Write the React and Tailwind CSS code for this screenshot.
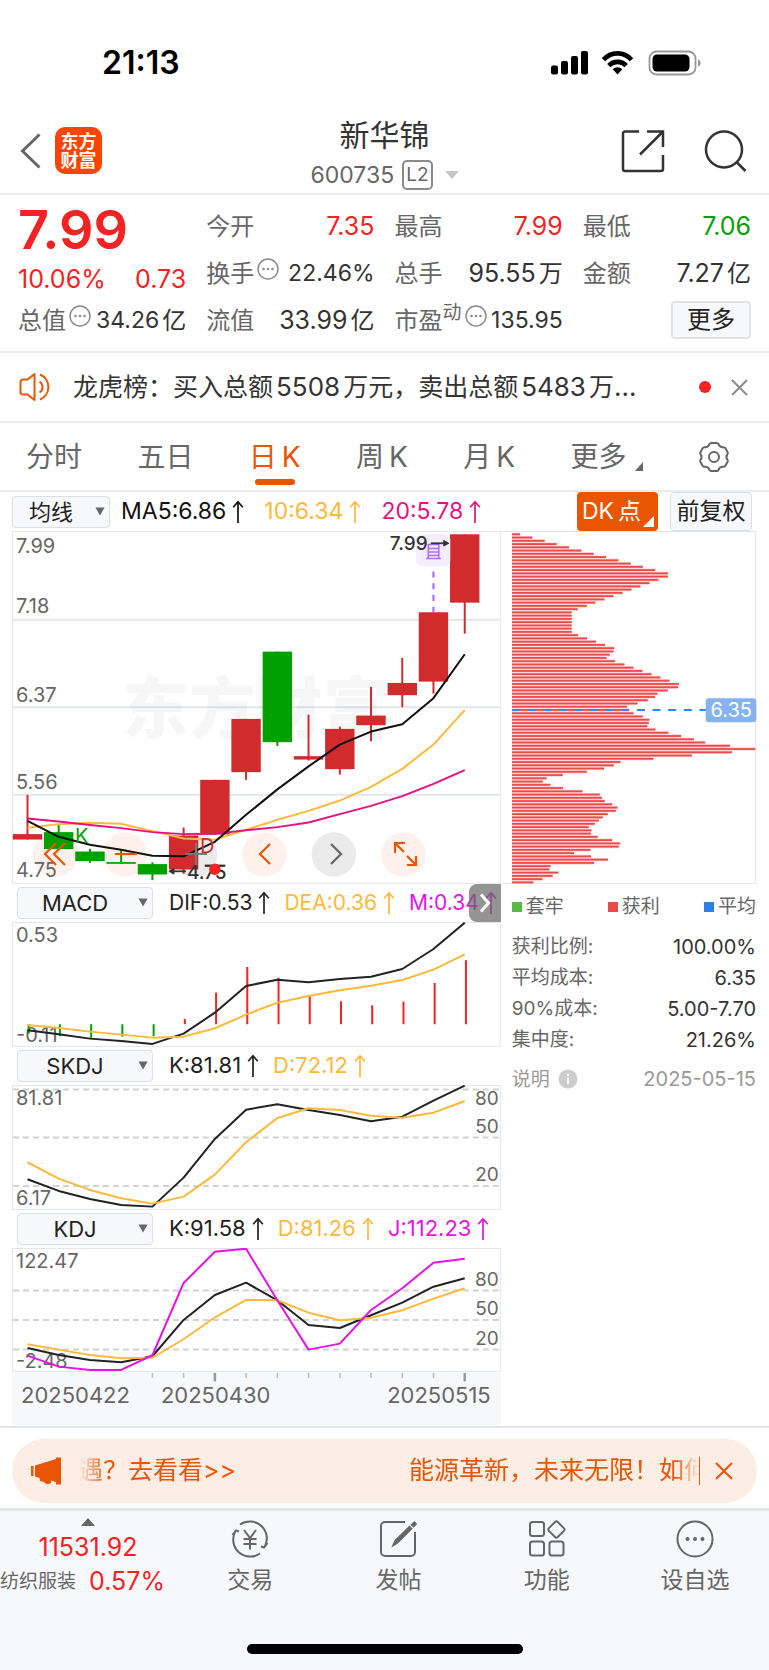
import React from "react";

const XS = [27.5, 58.7, 90, 121.2, 152.5, 183.7, 215, 246.2, 277.5, 308.7, 340, 371.2, 402.5, 433.7, 465];

// [body top, body bottom, high, low, rising]
const CANDLES = [
  [833.3, 838.7, 794, 838.7, true],
  [831.3, 848.3, 824, 848.3, false],
  [850.7, 860.3, 848, 862, false],
  [861.3, 863, 849, 863, false],
  [863.3, 873.7, 861.5, 879.3, false],
  [834.7, 868.7, 826.7, 873, true],
  [779, 833.7, 779, 833.7, true],
  [718, 771.3, 718, 779, true],
  [650.7, 741.3, 650.7, 745, false],
  [755.3, 758.7, 713.7, 759.7, true],
  [728, 768.3, 725.7, 773.7, true],
  [714.7, 724.3, 686, 740.3, true],
  [682, 694.3, 657, 706.3, true],
  [611.3, 680.7, 611.3, 692.7, true],
  [533.3, 601.7, 533.3, 632.7, true],
];
const MA5 = [820, 836, 844, 849, 855, 855.5, 841, 814, 788.5, 765.5, 743.7, 730.7, 723.3, 697.3, 653.3];
const MA10 = [827, 823.3, 822, 823, 830.3, 837.7, 839, 829, 819, 810, 799.7, 786, 768, 743.7, 709.3];
const MA20 = [817.7, 820.7, 824.2, 827.3, 831.3, 833.3, 833, 829.5, 826.3, 821.7, 813.3, 805, 795.3, 783, 769.3];

const DIF = [1029.3, 1033.3, 1037.7, 1040, 1043, 1032.7, 1011.7, 985, 978.7, 981.3, 978, 975.7, 968, 948, 921.7];
const DEA = [1024, 1027, 1030.7, 1033.7, 1036.7, 1035.7, 1027.3, 1013.7, 1001.7, 995, 989.3, 984.7, 979, 968.7, 953.3];
const MACD = [1032.7, 1035.3, 1037.3, 1035.7, 1035.3, 1018, 991.7, 966, 976.7, 995, 1000.3, 1004.3, 1000.7, 982, 959.3];

const SK = [1178.3, 1190, 1198, 1204, 1205.7, 1176.7, 1138, 1108.7, 1103.3, 1109, 1114, 1120.3, 1115.7, 1099.7, 1084.7];
const SD = [1161.3, 1177.7, 1189, 1197.3, 1202.7, 1195.7, 1173.7, 1141.3, 1117, 1107.3, 1109, 1114.7, 1116.7, 1111.7, 1100];

const KK = [1347, 1354, 1359, 1361.3, 1355.3, 1319, 1294, 1281.7, 1299.3, 1324, 1327, 1314.3, 1301.7, 1285.7, 1277.3];
const KD = [1343.3, 1348.7, 1354, 1357.3, 1356.7, 1338.3, 1316.3, 1299, 1299.3, 1311.7, 1319.3, 1316.7, 1309.3, 1297.7, 1287.3];
const KJ = [1354.7, 1365.7, 1369, 1369, 1354.3, 1282, 1250.7, 1247.7, 1299.3, 1348.7, 1342.7, 1309, 1287.3, 1261.7, 1257.7];

const CHIPS = [
  24, 61, 98, 134, 171, 208, 245, 282, 319, 356, 392, 429, 467, 467, 439, 412, 385, 358, 331, 304, 277, 250, 224, 197,
  179, 179, 179, 179, 179, 179, 179, 198, 225, 252, 279, 306, 304, 293, 283, 309, 337, 364, 391, 418, 445, 472, 500,
  498, 467, 436, 429, 407, 376, 345, 350, 364, 392, 412, 410, 406, 430, 469, 507, 545, 579, 653, 729, 659, 539, 424,
  325, 305, 276, 224, 152, 104, 92, 115, 153, 211, 263, 270, 278, 300, 316, 311, 287, 272, 260, 248, 230, 238, 237,
  257, 300, 324, 320, 235, 186, 237, 288, 246, 116, 112, 139, 122, 91, 64,
];

const pts = (ys) => ys.map((y, i) => `${XS[i]},${y}`).join(" ");

function Line({ ys, color }) {
  return <polyline points={pts(ys)} fill="none" stroke={color} strokeWidth="2" strokeLinejoin="round" />;
}

function AxisText({ x = 16, y, end, children }) {
  return (
    <text x={x} y={y} fontSize={end ? 19 : 20} fill="#666" textAnchor={end ? "end" : "start"}>
      {children}
    </text>
  );
}

function Frame({ y, h }) {
  return <rect x="12.5" y={y + 0.5} width="488" height={h - 1} fill="none" stroke="#e4e6ec" />;
}

function Dashes({ ys }) {
  return ys.map((y) => (
    <line key={y} x1="13" x2="500" y1={y} y2={y} stroke="#d2d2d2" strokeWidth="2" strokeDasharray="6 4" />
  ));
}

function More() {
  return (
    <svg viewBox="0 0 22 22" className="h-[22px] w-[22px] shrink-0 self-start" fill="none" stroke="#8c8c8c">
      <circle cx="11" cy="11" r="10" strokeWidth="1.5" />
      <g fill="#8c8c8c" stroke="none">
        <circle cx="6.5" cy="11" r="1.3" />
        <circle cx="11" cy="11" r="1.3" />
        <circle cx="15.5" cy="11" r="1.3" />
      </g>
    </svg>
  );
}

function Stat({ label, sup, info, value, unit, color = "text-[#333]" }) {
  return (
    <div className="flex h-[47px] items-center">
      <dt className="flex items-center text-[#666]">
        {label}
        {sup && <sup className="-top-2 text-[19px] leading-none">{sup}</sup>}
      </dt>
      {info && (
        <span className="flex h-8 pl-[3px]">
          <More />
        </span>
      )}
      <dd className={`ml-auto flex items-center gap-[3px] whitespace-nowrap ${info ? "text-[23px]" : "text-[25px]"} ${color}`}>
        {value}
        {unit && <span className="text-[24px]">{unit}</span>}
      </dd>
    </div>
  );
}

function Picker({ label, options, className }) {
  return (
    <div className={`relative ${className}`}>
      <select
        aria-label={label}
        className="block h-8 w-full appearance-none rounded border border-[#dcdfe5] bg-[#f7f8fb] pr-5 text-center text-[22px] leading-none text-[#222]"
      >
        {options.map((o) => (
          <option key={o}>{o}</option>
        ))}
      </select>
      <svg viewBox="0 0 10 9" className="pointer-events-none absolute right-[5px] top-[11px] h-[9px] w-[10px]" fill="#666">
        <path d="M0.5 0.5h9L5 8.5z" />
      </svg>
    </div>
  );
}

function Up({ children, color }) {
  return (
    <span className={`flex items-center gap-[6px] whitespace-nowrap ${color}`}>
      {children}
      <svg viewBox="0 0 12 24" className="h-6 w-3" fill="none" stroke="currentColor" strokeWidth="1.7">
        <path d="M6 23V2M1.2 7.2L6 1.8l4.8 5.4" />
      </svg>
    </span>
  );
}

function IndicatorRow({ label, options, children }) {
  return (
    <div className="flex h-[38px] items-center pl-[5px]">
      <Picker label={label} options={options} className="w-[136px] shrink-0" />
      <div className="flex items-center gap-[14px] pl-4">{children}</div>
    </div>
  );
}

function StatusBar() {
  return (
    <div className="flex h-[103px] items-center justify-between pl-[102px] pr-[68px] pt-[22px]">
      <span className="text-[32px] font-semibold leading-none text-black">21:13</span>
      <svg viewBox="0 0 151 26" className="h-[26px] w-[151px]">
        <rect x="1" y="15.500" width="7" height="9" rx="2" />
        <rect x="11" y="11" width="7" height="13.500" rx="2" />
        <rect x="21" y="6" width="7" height="18.500" rx="2" />
        <rect x="31" y="1" width="7" height="23.500" rx="2" />
        <g fill="none" stroke="#000" strokeWidth="4.600">
          <path d="M53.500 9.800a18.500 18.500 0 0 1 28 0" />
          <path d="M58.800 15.600a12 12 0 0 1 17.400 0" />
        </g>
        <path d="M67.500 24.500l-4.800-5.300a6.800 6.800 0 0 1 9.600 0z" />
        <rect x="99.500" y="1.500" width="46" height="23" rx="7" fill="none" stroke="#999" strokeWidth="1.800" />
        <rect x="102.500" y="4.500" width="37" height="17" rx="4.500" />
        <path d="M148 9.500c2 .6 2.600 2 2.600 3.500s-.6 2.900-2.600 3.500z" fill="#999" />
      </svg>
    </div>
  );
}

function Header() {
  return (
    <header className="grid h-[92px] grid-cols-[1fr_auto_1fr] border-b-2 border-[#ececec]">
      <div className="flex items-center gap-[14px] pl-[20px] pt-[3px]">
        <button aria-label="返回">
          <svg viewBox="0 0 21 36" className="h-9 w-[21px]" fill="none" stroke="#666" strokeWidth="3">
            <path d="M19.500 1.500L2.500 18l17 16.500" />
          </svg>
        </button>
        <a
          href="#home"
          className="flex h-[47px] w-[47px] flex-col items-center justify-center rounded-[10px] bg-[#ff4400] text-[18px] font-bold leading-[19px] text-white"
        >
          <span>东方</span>
          <span>财富</span>
        </a>
      </div>
      <div className="flex flex-col items-center pt-3">
        <h1 className="text-[30px] leading-[40px] text-[#333]">新华锦</h1>
        <button className="flex items-center gap-[8px] text-[23px] leading-[40px] text-[#666]">
          600735
          <span className="rounded-[5px] border-2 border-[#8a8a8a] px-[2px] text-[19px] leading-[26px]">L2</span>
          <svg viewBox="0 0 14 8" className="ml-1 h-2 w-[14px]" fill="#c6c6c6">
            <path d="M0 0h14L7 8z" />
          </svg>
        </button>
      </div>
      <div className="flex items-center justify-end gap-[38px] pr-[22px] pt-[3px]">
        <button aria-label="分享">
          <svg viewBox="0 0 44 44" className="h-11 w-11" fill="none" stroke="#333" strokeWidth="2.500">
            <path d="M18 2.500H4a2 2 0 0 0-2 2V40a2 2 0 0 0 2 2h36a2 2 0 0 0 2-2V26M26 2.500h16V18M42 2.500L19 25.500" />
          </svg>
        </button>
        <button aria-label="搜索">
          <svg viewBox="0 0 44 44" className="h-11 w-11" fill="none" stroke="#333" strokeWidth="2.500">
            <circle cx="21" cy="20.500" r="18" />
            <path d="M33.500 33l9 9" />
          </svg>
        </button>
      </div>
    </header>
  );
}

function Quote() {
  return (
    <section className="grid grid-cols-4 gap-x-[20px] border-b-2 border-[#e9ebf1] px-[18px] pb-[7px] pt-2 text-[24px] leading-none">
      <div>
        <p className="h-[59px] text-[54px] font-semibold leading-[54px] text-[#f32323]">7.99</p>
        <p className="flex h-[35px] items-center justify-between text-[25px] text-[#f32323]">
          <span>10.06%</span>
          <span>0.73</span>
        </p>
        <dl>
          <Stat label="总值" info value="34.26" unit="亿" />
        </dl>
      </div>
      <dl>
        <Stat label="今开" value="7.35" color="text-[#f32323]" />
        <Stat label="换手" info value="22.46%" />
        <Stat label="流值" value="33.99" unit="亿" />
      </dl>
      <dl>
        <Stat label="最高" value="7.99" color="text-[#f32323]" />
        <Stat label="总手" value="95.55" unit="万" />
        <Stat label="市盈" sup="动" info value="135.95" />
      </dl>
      <div>
        <dl>
          <Stat label="最低" value="7.06" color="text-[#0a9d0a]" />
          <Stat label="金额" value="7.27" unit="亿" />
        </dl>
        <div className="flex h-[45px] items-center justify-end">
          <button className="h-[38px] rounded border-2 border-[#e1e3e8] bg-[#f7f8fb] px-[14px] text-[#222]">更多</button>
        </div>
      </div>
    </section>
  );
}

function News() {
  return (
    <section className="flex h-[70px] items-center border-b-2 border-[#ececec] pl-[19px] pr-[21px]">
      <svg viewBox="0 0 34 30" className="h-[30px] w-[34px] shrink-0" fill="none" stroke="#ea5504" strokeWidth="2">
        <path d="M15.500 2v26l-7-5.500H4a2.500 2.500 0 0 1-2.500-2.500V10A2.500 2.500 0 0 1 4 7.500h4.500z" strokeLinejoin="round" />
        <path d="M20.500 9.500a6.500 6.500 0 0 1 0 11M21 2.500a13.500 13.500 0 0 1 0 25" />
      </svg>
      <a href="#news" className="min-w-0 flex-1 truncate pl-5 text-[25px] text-[#333]">
        龙虎榜：买入总额<span className="px-[3px] text-[26px]">5508</span>万元，卖出总额
        <span className="px-[3px] text-[26px]">5483</span>万<span className="text-[26px]">...</span>
      </a>
      <span className="h-3 w-3 shrink-0 rounded-full bg-[#f32323]" />
      <button aria-label="关闭" className="ml-5">
        <svg viewBox="0 0 17 17" className="h-[17px] w-[17px]" stroke="#8c8c8c" strokeWidth="2">
          <path d="M1 1l15 15M16 1L1 16" />
        </svg>
      </button>
    </section>
  );
}

function Tabs() {
  const items = [["分时"], ["五日"], ["日", "K"], ["周", "K"], ["月", "K"]];
  return (
    <nav className="flex h-[69px] items-center justify-between border-b-2 border-[#ececec] pl-[26px] pr-[39px] text-[28px] leading-none text-[#666]">
      {items.map(([a, b]) => (
        <button
          key={a}
          className={`relative flex h-[67px] items-center gap-[5px] whitespace-nowrap ${a === "日" ? "text-[#ea5504]" : ""}`}
        >
          <span>{a}</span>
          {b && <span>{b}</span>}
          {a === "日" && (
            <span className="absolute bottom-[5px] left-1/2 h-[6px] w-10 -translate-x-1/2 rounded-full bg-[#ea5504]" />
          )}
        </button>
      ))}
      <button className="flex items-end gap-2">
        更多
        <svg viewBox="0 0 8 9" className="h-[9px] w-2" fill="#666">
          <path d="M8 0v9H0z" />
        </svg>
      </button>
      <button aria-label="设置">
        <svg viewBox="0 0 32 32" className="h-8 w-8" fill="none" stroke="#666" strokeWidth="2" strokeLinejoin="round">
          <path d="M11.500 3.200Q12 2 13.200 2h5.600q1.200 0 1.700 1.200 1.300 3.300 4.700 3 1.500-.1 2.200 1.100l2.200 3.900q.6 1.200-.2 2.200-2 2.600 0 5.200.8 1 .2 2.200l-2.200 3.900q-.7 1.200-2.200 1.100-3.400-.3-4.700 3-.5 1.200-1.700 1.200h-5.600q-1.200 0-1.700-1.200-1.300-3.300-4.700-3-1.500.1-2.200-1.100l-2.200-3.900q-.6-1.200.2-2.200 2-2.600 0-5.200-.8-1-.2-2.200l2.200-3.900q.7-1.200 2.200-1.100 3.400.3 4.700-3z" />
          <circle cx="16" cy="16" r="5" />
        </svg>
      </button>
    </nav>
  );
}

function ChartToolbar() {
  return (
    <div className="flex h-[39px] items-center px-3 text-[23px]">
      <Picker label="均线类型" options={["均线"]} className="w-[98px] shrink-0" />
      <div className="flex items-center gap-[20px] pl-[11px]">
        <Up color="text-[#111]">MA5:6.86</Up>
        <Up color="text-[#fdb93b]">10:6.34</Up>
        <Up color="text-[#e6117f]">20:5.78</Up>
      </div>
      <div className="ml-auto flex h-full gap-3 pr-[5px]">
        <button className="relative flex w-[81px] items-center gap-1 rounded bg-[#ea5504] pl-[5px] leading-none text-white">
          <span>DK</span>
          <span>点</span>
          <svg viewBox="0 0 11 11" className="absolute bottom-1 right-1 h-[11px] w-[11px]" fill="#fff">
            <path d="M11 0v11H0z" />
          </svg>
        </button>
        <button className="w-[82px] whitespace-nowrap rounded border border-[#dcdfe5] bg-[#f7f8fb] leading-none text-[#222]">
          前复权
        </button>
      </div>
    </div>
  );
}

const CONTROLS = [
  ["最早", "#ea5504", "M15 4L4 15l11 11M24 4L13 15l11 11"],
  ["缩小", "#ea5504", "M4 15h22"],
  ["放大", "#777", "M4 15h22M15 4v22"],
  ["左移", "#ea5504", "M19 5L9 15l10 10"],
  ["右移", "#666", "M10 5l10 10-10 10"],
  ["全屏", "#ea5504", "M14 4H4v10M4 4l9 9M16 26h9V17M25 26l-9-9"],
];

function CandleChart() {
  return (
    <div className="relative">
      <svg viewBox="12 530 489 353" className="block h-auto w-full" role="img" aria-label="日K线图">
        <Frame y={530} h={353} />
        <g stroke="#e4e6ee" strokeWidth="2">
          <path d="M13 618.700h487M13 706.300h487M13 794h487" />
        </g>
        <text x="122" y="732" fontSize="67" fontWeight="900" fill="#000" opacity="0.03">
          东方财富
        </text>
        {[55.5, 125, 195, 264.5, 334, 403.5].map((cx, i) => (
          <circle key={cx} cx={cx} cy="853.700" r="22.300" fill={i === 2 || i === 4 ? "#ebebeb" : "#fef1eb"} />
        ))}
        {CANDLES.map(([t, b, hi, lo, up], i) => (
          <g key={i} fill={up ? "#d12b2e" : "#00a000"}>
            <rect x={XS[i] - 14.7} y={t} width="29.400" height={b - t} />
            <rect x={XS[i] - 1} y={hi} width="2" height={lo - hi} />
          </g>
        ))}
        <Line ys={MA10} color="#fdb93b" />
        <Line ys={MA20} color="#e6117f" />
        <Line ys={MA5} color="#111" />
        <AxisText y="552">7.99</AxisText>
        <AxisText y="612">7.18</AxisText>
        <AxisText y="701">6.37</AxisText>
        <AxisText y="788">5.56</AxisText>
        <AxisText y="876">4.75</AxisText>
        <text x="75" y="842" fontSize="20" fill="#00a000">K</text>
        <text x="200" y="852" fontSize="20" fill="#d12b2e">D</text>
        <rect x="416.500" y="533" width="34" height="32.500" rx="6" fill="#f4edfe" />
        <g fill="none" stroke="#b06cfb" strokeWidth="1.600">
          <path d="M428.500 543.500h10.500v14h-10.500zM428.500 547.500h10.500M428.500 551h10.500M428.500 554.500h10.500M426.500 557.500h14.500" />
          <path d="M433.700 570.500v41" strokeWidth="2.200" strokeDasharray="6 5.800" />
        </g>
        <g fontSize="19" fontWeight="500" fill="#333">
          <text x="390" y="549">7.99</text>
          <text x="187" y="878">4.75</text>
        </g>
        <g stroke="#333" strokeWidth="1.800" fill="#333">
          <path d="M431 542.300h13" />
          <path d="M444 539.500v5.600l5-2.800z" strokeWidth="1" />
          <path d="M174 870.500h12" />
          <path d="M174 867.700v5.600l-5-2.800z" strokeWidth="1" />
          <path d="M205 864.700h20.500" />
        </g>
        <circle cx="215" cy="868.500" r="5.700" fill="#f32323" />
      </svg>
      <div className="absolute bottom-[7px] left-[21px] flex gap-[25px]">
        {CONTROLS.map(([name, color, d]) => (
          <button key={name} aria-label={name} className="flex h-[45px] w-[45px] items-center justify-center rounded-full">
            <svg viewBox="0 0 30 30" className="h-[30px] w-[30px]" fill="none" stroke={color} strokeWidth="2.200">
              <path d={d} />
            </svg>
          </button>
        ))}
      </div>
    </div>
  );
}

function MacdChart() {
  return (
    <svg viewBox="12 921 489 125" className="block h-auto w-full" role="img" aria-label="MACD">
      <Frame y={921} h={125} />
      <AxisText y="941">0.53</AxisText>
      <AxisText y="1041">-0.11</AxisText>
      {MACD.map((y, i) => (
        <rect
          key={i}
          x={XS[i] + 0.2}
          y={Math.min(y, 1023.3)}
          width="2"
          height={Math.abs(1023.3 - y)}
          fill={i < 5 ? "#00a000" : "#f32323"}
        />
      ))}
      <Line ys={DIF} color="#222" />
      <Line ys={DEA} color="#fdb93b" />
    </svg>
  );
}

function SkdjChart() {
  return (
    <svg viewBox="12 1084 489 125" className="block h-auto w-full" role="img" aria-label="SKDJ">
      <Frame y={1084} h={125} />
      <Dashes ys={[1088.5, 1136.5, 1185]} />
      <AxisText y="1104">81.81</AxisText>
      <AxisText y="1204">6.17</AxisText>
      <AxisText x={499} y="1104" end>80</AxisText>
      <AxisText x={499} y="1132" end>50</AxisText>
      <AxisText x={499} y="1180" end>20</AxisText>
      <Line ys={SK} color="#222" />
      <Line ys={SD} color="#fdb93b" />
    </svg>
  );
}

function KdjChart() {
  return (
    <svg viewBox="12 1247 489 178" className="block h-auto w-full" role="img" aria-label="KDJ">
      <rect x="12" y="1371" width="489" height="54" fill="#f7f8fb" />
      <Frame y={1247} h={124} />
      <Dashes ys={[1289.5, 1319, 1348.5]} />
      <AxisText y="1267">122.47</AxisText>
      <AxisText y="1367">-2.48</AxisText>
      <AxisText x={499} y="1285" end>80</AxisText>
      <AxisText x={499} y="1314" end>50</AxisText>
      <AxisText x={499} y="1344" end>20</AxisText>
      <Line ys={KK} color="#222" />
      <Line ys={KD} color="#fdb93b" />
      <Line ys={KJ} color="#e514e5" />
      {XS.slice(4).map((x, i) => {
        const major = i === 2 || i === 10;
        return (
          <line
            key={x}
            x1={x}
            x2={x}
            y1="1372"
            y2={major ? 1380.5 : 1377}
            stroke={major ? "#999" : "#bbb"}
            strokeWidth={major ? 2.5 : 1.5}
          />
        );
      })}
      <g fontSize="22" fill="#666">
        <text x="21" y="1402">20250422</text>
        <text x="161" y="1402">20250430</text>
        <text x="491" y="1402" textAnchor="end">20250515</text>
      </g>
    </svg>
  );
}

function ChipChart() {
  return (
    <svg viewBox="501 530 256 353" className="block h-auto w-full" role="img" aria-label="筹码分布">
      <path d="M501 530.500h254.500v352H501" fill="none" stroke="#dfe1e7" />
      {CHIPS.map((w, i) => (
        <g key={i}>
          <rect x="512" y={531.7 + i * 3.25} width={w / 3} height="3.250" fill="#fbcfcf" />
          <rect x="512" y={532.4 + i * 3.25} width={w / 3} height="1.800" fill="#ec4a4a" />
        </g>
      ))}
      <path d="M512 708.700h194" stroke="#3b86ea" strokeWidth="2" strokeDasharray="8 7.600" />
      <rect x="705.500" y="697" width="50.500" height="24" rx="3" fill="#86b3f0" />
      <text x="731" y="716" fontSize="20" fill="#fff" textAnchor="middle">
        6.35
      </text>
    </svg>
  );
}

function ChipPanel() {
  const rows = [
    ["获利比例:", "100.00%"],
    ["平均成本:", "6.35"],
    ["90%成本:", "5.00-7.70"],
    ["集中度:", "21.26%"],
  ];
  const legend = [
    ["套牢", "bg-[#58b947]"],
    ["获利", "bg-[#ec4a4a]"],
    ["平均", "bg-[#2f80e6]"],
  ];
  return (
    <aside className="w-[34.4%] shrink-0">
      <ChipChart />
      <div className="pl-[11px] pr-px text-[19px] leading-none text-[#666]">
        <ul className="flex h-[45px] items-center justify-between">
          {legend.map(([t, c]) => (
            <li key={t} className="flex items-center gap-1">
              <span className={`h-[10px] w-[10px] ${c}`} />
              {t}
            </li>
          ))}
        </ul>
        <table className="mt-[2px] w-full">
          <tbody>
            {rows.map(([k, v]) => (
              <tr key={k} className="h-[31px]">
                <th scope="row" className="whitespace-nowrap text-left font-normal">{k}</th>
                <td className="whitespace-nowrap text-right text-[20px] text-[#333]">{v}</td>
              </tr>
            ))}
          </tbody>
        </table>
        <p className="flex h-12 items-center text-[#999]">
          <span>说明</span>
          <svg viewBox="0 0 20 20" className="ml-2 h-5 w-5">
            <circle cx="10" cy="10" r="9.500" fill="#ccc" />
            <path d="M9 8.500h2V15H9zM9 5h2v2H9z" fill="#fff" />
          </svg>
          <time className="ml-auto text-[20px]">2025-05-15</time>
        </p>
      </div>
    </aside>
  );
}

function Promo() {
  return (
    <section className="border-b-[3px] border-t-2 border-[#e4e5e8] px-3 pb-[5px] pt-[11px]">
      <div className="flex h-[64px] items-center rounded-full bg-[#fdeee5] pl-[18px] pr-[24px] text-[25px] leading-none text-[#ea5504]">
        <svg viewBox="0 0 32 28" className="h-7 w-8 shrink-0" fill="#ea5504">
          <path d="M1 9h2.500v10H1zM5 8.500L26 2V.500h5v27h-5V25l-5-1.500v2.700l-4.500 1-2.500-2.300-4-.8L9.500 21 5 19.500z" />
        </svg>
        <a
          href="#promo"
          className="ml-[16px] flex min-w-0 flex-1 justify-between whitespace-nowrap py-1 [mask-image:linear-gradient(to_right,transparent,black_30px,black_calc(100%-24px),transparent)]"
        >
          <span>遇？去看看&gt;&gt;</span>
          <span className="w-[290px] shrink-0">能源革新，未来无限！如何</span>
        </a>
        <span className="h-7 w-px bg-[#ea5504]" />
        <button aria-label="关闭推广" className="ml-[15px]">
          <svg viewBox="0 0 18 18" className="h-[18px] w-[18px]" stroke="#ea5504" strokeWidth="2">
            <path d="M1 1l16 16M17 1L1 17" />
          </svg>
        </button>
      </div>
    </section>
  );
}

const NAV = [
  [
    "交易",
    <>
      <path d="M10 5.500A17 17 0 0 1 35 27M37.500 24l-3.500 4.500-3-1M30 34.500A17 17 0 0 1 5 13M2.500 16L6 11.500l3 1" />
      <path d="M14 11l6 8 6-8M20 19v11.500M13.500 20h13M13.500 25h13" />
    </>,
  ],
  [
    "发帖",
    <>
      <path d="M27 3H7a4 4 0 0 0-4 4v26a4 4 0 0 0 4 4h26a4 4 0 0 0 4-4V13" />
      <path d="M15.500 26l2-4.500L31.500 8l1.800 1.800L19 24zM34 5.800l2.300-2.300 1.500 1.500-2.300 2.300z" fill="#666" />
    </>,
  ],
  [
    "功能",
    <>
      <rect x="3" y="3" width="14" height="14" rx="2.500" />
      <rect x="3" y="22.500" width="14" height="14" rx="2.500" />
      <rect x="22.500" y="22.500" width="14" height="14" rx="2.500" />
      <path d="M28.300 2.800L21.700 9.400a1.500 1.500 0 0 0 0 2.200l6.600 6.600a1.500 1.500 0 0 0 2.200 0l6.600-6.600a1.500 1.500 0 0 0 0-2.200l-6.600-6.600a1.500 1.500 0 0 0-2.200 0z" />
    </>,
  ],
  [
    "设自选",
    <>
      <circle cx="20" cy="20" r="17.500" />
      <g fill="#666" stroke="none">
        <circle cx="12.500" cy="20" r="2" />
        <circle cx="20" cy="20" r="2" />
        <circle cx="27.500" cy="20" r="2" />
      </g>
    </>,
  ],
];

function BottomNav() {
  return (
    <footer className="flex flex-1 flex-col justify-between bg-[#f7f8fb]">
      <nav className="flex">
        <a href="#sector" className="flex w-[176px] shrink-0 flex-col items-center pt-[7px] text-[25px] leading-none text-[#f32323]">
          <svg viewBox="0 0 14 8" className="h-2 w-[14px]" fill="#666">
            <path d="M0 8h14L7 0z" />
          </svg>
          <span className="pt-[9px]">11531.92</span>
          <span className="flex w-full items-center justify-between whitespace-nowrap pr-[11px] pt-[9px]">
            <span className="text-[19px] text-[#666]">纺织服装</span>
            0.57%
          </span>
        </a>
        {NAV.map(([label, icon]) => (
          <a key={label} href="#tab" className="flex flex-1 flex-col items-center pt-2 text-[23px] leading-[36px] text-[#666]">
            <svg viewBox="0 0 40 40" className="h-10 w-10" fill="none" stroke="#666" strokeWidth="2">
              {icon}
            </svg>
            <span className="pt-[3px]">{label}</span>
          </a>
        ))}
      </nav>
      <div className="mx-auto mb-4 h-[10px] w-[276px] rounded-full bg-black" />
    </footer>
  );
}

export default function App() {
  return (
    <div className="flex min-h-screen w-full flex-col overflow-x-hidden bg-white font-['Inter','Noto_Sans_CJK_SC',sans-serif]">
      <StatusBar />
      <Header />
      <Quote />
      <News />
      <Tabs />
      <ChartToolbar />
      <main className="flex px-3">
        <div className="min-w-0 flex-1">
          <CandleChart />
          <div className="relative text-[21px]">
            <IndicatorRow label="指标一" options={["MACD"]}>
              <Up color="text-[#222]">DIF:0.53</Up>
              <Up color="text-[#fdb93b]">DEA:0.36</Up>
              <Up color="text-[#e514e5]">M:0.34</Up>
            </IndicatorRow>
            <button
              aria-label="收起"
              className="absolute right-0 top-0 flex h-[38px] w-8 items-center justify-center rounded-l-lg bg-[#666]/70"
            >
              <svg viewBox="0 0 12 20" className="h-5 w-3" fill="none" stroke="#fff" strokeWidth="3">
                <path d="M2 1.500l7.500 8.500L2 18.500" />
              </svg>
            </button>
          </div>
          <MacdChart />
          <div className="text-[22px]">
            <IndicatorRow label="指标二" options={["SKDJ"]}>
              <Up color="text-[#222]">K:81.81</Up>
              <Up color="text-[#fdb93b]">D:72.12</Up>
            </IndicatorRow>
          </div>
          <SkdjChart />
          <div className="text-[22px]">
            <IndicatorRow label="指标三" options={["KDJ"]}>
              <Up color="text-[#222]">K:91.58</Up>
              <Up color="text-[#fdb93b]">D:81.26</Up>
              <Up color="text-[#e514e5]">J:112.23</Up>
            </IndicatorRow>
          </div>
          <KdjChart />
        </div>
        <ChipPanel />
      </main>
      <Promo />
      <BottomNav />
    </div>
  );
}
